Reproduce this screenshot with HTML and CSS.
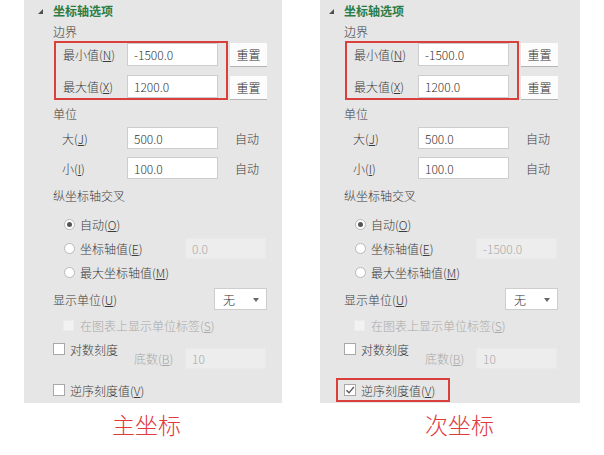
FILE: index.html
```html
<!DOCTYPE html>
<html lang="zh-CN">
<head>
<meta charset="utf-8">
<title>坐标轴选项</title>
<link rel="stylesheet" href="styles.css">
</head>
<body>
<div class="page">
  <div class="col col-left">
    <div class="panel panel-left">
      <div class="hdr"><span class="tri"></span><span class="hdr-text">坐标轴选项</span></div>
      <div class="sec sec-first">边界</div>
      <div class="bounds">
        <div class="redbox">
          <div class="frow"><span class="lbl-box">最小值(<u>N</u>)</span><span class="inp">-1500.0</span></div>
          <div class="frow"><span class="lbl-box">最大值(<u>X</u>)</span><span class="inp">1200.0</span></div>
        </div>
        <div class="btns"><span class="btn">重置</span><span class="btn">重置</span></div>
      </div>
      <div class="sec sec-unit">单位</div>
      <div class="urow urow-1"><span class="lbl-unit">大(<u>J</u>)</span><span class="inp inp-unit">500.0</span><span class="auto">自动</span></div>
      <div class="urow urow-2"><span class="lbl-unit">小(<u>I</u>)</span><span class="inp inp-unit">100.0</span><span class="auto">自动</span></div>
      <div class="sec sec-cross">纵坐标轴交叉</div>
      <div class="radios">
        <div class="rrow"><span class="radio on"></span><span>自动(<u>O</u>)</span></div>
        <div class="rrow"><span class="radio"></span><span class="rlbl-val">坐标轴值(<u>E</u>)</span><span class="inp dis">0.0</span></div>
        <div class="rrow"><span class="radio"></span><span>最大坐标轴值(<u>M</u>)</span></div>
      </div>
      <div class="drow"><span class="lbl-disp">显示单位(<u>U</u>)</span><span class="sel">无<span class="caret"></span></span></div>
      <div class="crow-dis"><span class="cb cb-dis"></span><span class="txt-dis">在图表上显示单位标签(<u>S</u>)</span></div>
      <div class="logrow">
        <div class="loglbl"><span class="cb"></span><span>对数刻度</span></div>
        <div class="basegrp"><span class="base-lbl">底数(<u>B</u>)</span><span class="inp dis">10</span></div>
      </div>
      <div class="revrow"><span class="cb"></span><span>逆序刻度值(<u>V</u>)</span></div>
    </div>
    <div class="caption caption-left">主坐标</div>
  </div>

  <div class="col col-right">
    <div class="panel panel-right">
      <div class="hdr"><span class="tri"></span><span class="hdr-text">坐标轴选项</span></div>
      <div class="sec sec-first">边界</div>
      <div class="bounds">
        <div class="redbox">
          <div class="frow"><span class="lbl-box">最小值(<u>N</u>)</span><span class="inp">-1500.0</span></div>
          <div class="frow"><span class="lbl-box">最大值(<u>X</u>)</span><span class="inp">1200.0</span></div>
        </div>
        <div class="btns"><span class="btn">重置</span><span class="btn">重置</span></div>
      </div>
      <div class="sec sec-unit">单位</div>
      <div class="urow urow-1"><span class="lbl-unit">大(<u>J</u>)</span><span class="inp inp-unit">500.0</span><span class="auto">自动</span></div>
      <div class="urow urow-2"><span class="lbl-unit">小(<u>I</u>)</span><span class="inp inp-unit">100.0</span><span class="auto">自动</span></div>
      <div class="sec sec-cross">纵坐标轴交叉</div>
      <div class="radios">
        <div class="rrow"><span class="radio on"></span><span>自动(<u>O</u>)</span></div>
        <div class="rrow"><span class="radio"></span><span class="rlbl-val">坐标轴值(<u>E</u>)</span><span class="inp dis">-1500.0</span></div>
        <div class="rrow"><span class="radio"></span><span>最大坐标轴值(<u>M</u>)</span></div>
      </div>
      <div class="drow"><span class="lbl-disp">显示单位(<u>U</u>)</span><span class="sel">无<span class="caret"></span></span></div>
      <div class="crow-dis"><span class="cb cb-dis"></span><span class="txt-dis">在图表上显示单位标签(<u>S</u>)</span></div>
      <div class="logrow">
        <div class="loglbl"><span class="cb"></span><span>对数刻度</span></div>
        <div class="basegrp"><span class="base-lbl">底数(<u>B</u>)</span><span class="inp dis">10</span></div>
      </div>
      <div class="revrow revrow-boxed"><span class="cb cb-on"><svg width="10" height="10" viewBox="0 0 10 10"><path d="M1.5 5.2 L4 7.8 L8.8 2" fill="none" stroke="#555" stroke-width="1.3"/></svg></span><span>逆序刻度值(<u>V</u>)</span></div>
    </div>
    <div class="caption caption-right">次坐标</div>
  </div>
</div>
</body>
</html>
```

FILE: styles.css
```css
* { box-sizing: border-box; }
html, body { margin: 0; padding: 0; background: #ffffff; }
body {
  font-family: "Noto Sans CJK SC", "Noto Sans", sans-serif;
  font-size: 12px;
  font-weight: 300;
  color: #3c3c3c;
  width: 604px;
  height: 455px;
  overflow: hidden;
}
u { text-decoration: underline; text-underline-offset: 1px; }

.page { display: flex; padding-left: 24px; gap: 38px; }
.col-left { width: 258px; }
.col-right { width: 260px; }

.panel {
  background: #e6e6e6;
  height: 403px;
  padding-top: 0;
}
.panel-left { padding-left: 29px; }
.panel-right { padding-left: 24px; }

.hdr { display: flex; align-items: center; height: 21px; margin-left: -15px; }
.tri {
  width: 0; height: 0;
  border-left: 5px solid transparent;
  border-bottom: 5px solid #505050;
  margin-right: 10px;
  margin-top: 1px;
}
.hdr-text { color: #2b7d45; font-weight: bold; }

.sec { display: flex; align-items: center; height: 18px; }
.sec-first { height: 20px; }
.sec-unit { margin-top: 4px; }
.sec-cross { margin-top: 7px; }

.bounds { display: flex; margin-left: 1px; }
.redbox {
  border: 2px solid #d9403c;
  padding: 0 8px 0 7px;
  display: flex;
  flex-direction: column;
  gap: 9px;
}
.frow { display: flex; align-items: center; height: 23px; }
.lbl-box { width: 64px; }

.inp {
  display: flex;
  align-items: center;
  width: 91px;
  height: 23px;
  padding-left: 6px;
  background: #fff;
  border: 1px solid #cdcdcd;
  color: #333;
}
.btns { display: flex; flex-direction: column; gap: 9px; margin: 2px 0 0 2px; }
.btn {
  display: flex;
  align-items: center;
  justify-content: center;
  width: 37px;
  height: 24px;
  background: #fcfcfc;
  border-bottom: 1px solid #b4b4b4;
  color: #333;
}

.urow { display: flex; align-items: center; height: 22px; }
.urow-1 { margin-top: 5px; }
.urow-2 { margin-top: 8px; }
.lbl-unit { width: 74px; padding-left: 9px; }
.inp-unit { height: 22px; }
.auto { margin-left: 17px; }

.radios { display: flex; flex-direction: column; gap: 2px; margin-top: 9px; }
.rrow { display: flex; align-items: center; height: 22px; padding-left: 11px; }
.radio {
  width: 11px; height: 11px;
  border-radius: 50%;
  background: #fff;
  border: 1px solid #b8b8b8;
  margin-right: 5px;
  display: flex; align-items: center; justify-content: center;
}
.radio.on::after {
  content: "";
  width: 5px; height: 5px;
  border-radius: 50%;
  background: #555;
}
.rlbl-val { width: 105px; }
.inp.dis {
  width: 81px;
  height: 21px;
  background: #ededed;
  border: 1px solid #e9e9e9;
  color: #a8a8a8;
}

.drow { display: flex; align-items: center; height: 22px; margin-top: 5px; }
.lbl-disp { width: 161px; }
.sel {
  position: relative;
  display: flex; align-items: center;
  width: 53px; height: 22px;
  padding-left: 8px;
  background: #fff;
  border: 1px solid #cdcdcd;
  color: #333;
}
.caret {
  position: absolute;
  right: 7px; top: 9px;
  width: 0; height: 0;
  border-left: 3px solid transparent;
  border-right: 3px solid transparent;
  border-top: 4px solid #666;
}

.crow-dis { display: flex; align-items: center; height: 22px; margin-top: 4px; padding-left: 10px; }
.cb {
  display: flex; align-items: center; justify-content: center;
  width: 12px; height: 12px;
  background: #fff;
  border: 1px solid #a8a8a8;
  margin-right: 5px;
  flex: none;
}
.cb-dis { width: 11px; height: 11px; background: #f2f2f2; border-color: #ececec; margin-right: 6px; }
.txt-dis { color: #a8a8a8; }

.logrow { display: flex; align-items: flex-start; margin-top: 4px; }
.loglbl { display: flex; align-items: center; height: 18px; width: 81px; }
.basegrp { display: flex; align-items: center; margin-top: 8px; height: 21px; }
.base-lbl { width: 51px; color: #a8a8a8; }

.revrow { display: flex; align-items: center; height: 24px; margin-top: 9px; }
.revrow-boxed {
  border: 2px solid #d9403c;
  margin-left: -8px;
  padding-left: 6px;
  width: 114px;
}

.caption {
  height: 30px;
  line-height: 30px;
  margin-top: 6px;
  font-size: 23px;
  font-weight: 300;
  color: #e03a3d;
}
.caption-left { padding-left: 88px; }
.caption-right { padding-left: 105px; }
```
